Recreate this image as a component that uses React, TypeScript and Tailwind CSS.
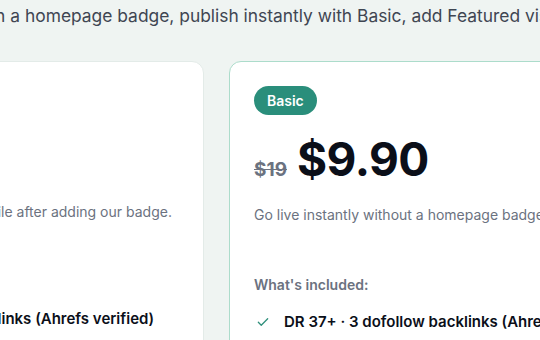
import React from "react";

function Check() {
  return (
    <svg width="14" height="14" viewBox="0 0 24 24" fill="none" stroke="#2f8f7b" strokeWidth="2.2" strokeLinecap="round" strokeLinejoin="round">
      <path d="M4 12.5l5 5L20 6.5" />
    </svg>
  );
}

export default function App() {
  return (
    <div
      className="w-[540px] h-[340px] overflow-hidden bg-[#eff4f2] text-[#111827]"
      style={{ fontFamily: "Inter, 'Noto Sans', sans-serif" }}
    >
      <div className="pt-[5px] whitespace-nowrap text-[17.4px] leading-[22px] text-[#3f4652] ml-[-129px]">
        Submit free with a homepage badge, publish instantly with Basic, add Featured visibility for more exposure.
      </div>
      <div className="mt-[34px] flex gap-[25px] ml-[-176px]">
        <div className="w-[380px] shrink-0 h-[300px] bg-white rounded-[12px] border border-[#e3ebe8] px-[24px] pt-[24px]">
          <div className="h-[29px] w-fit px-[13px] rounded-full bg-[#e5e7eb] text-[14px] font-semibold leading-[29px] text-[#374151]">Free</div>
          <div className="mt-[21px] flex items-baseline gap-3">
            <span className="text-[46px] leading-[46px] font-bold tracking-[-0.5px] text-[#0b0f19]">$0</span>
          </div>
          <div className="mt-[20px] text-[14px] leading-[20px] text-[#6b7280] whitespace-nowrap">
            Get featured via a profile after adding our badge.
          </div>
          <div className="mt-[50px] text-[14px] leading-[20px] font-semibold text-[#6b7280]">What's included:</div>
          <div className="mt-[17px] flex items-center gap-[19px] whitespace-nowrap">
            <span className="ml-[2px] flex"><Check /></span>
            <span className="text-[15px] leading-[20px] font-semibold text-[#0b0f19]">DR 37+ · 2 backlinks (Ahrefs verified)</span>
          </div>
        </div>
        <div className="w-[380px] shrink-0 h-[300px] bg-white rounded-[12px] border border-[#acdccb] px-[24px] pt-[24px]">
          <div className="h-[29px] w-fit px-[13px] rounded-full bg-[#2a8e7b] text-[14px] font-semibold leading-[29px] text-white">Basic</div>
          <div className="mt-[21px] flex items-baseline gap-[10px]">
            <span className="text-[19px] font-bold text-[#6b7280] line-through">$19</span>
            <span className="text-[46px] leading-[46px] font-bold tracking-[-0.5px] text-[#0b0f19]">$9.90</span>
          </div>
          <div className="mt-[20px] text-[14px] leading-[20px] text-[#6b7280] whitespace-nowrap">
            Go live instantly without a homepage badge.
          </div>
          <div className="mt-[50px] text-[14px] leading-[20px] font-semibold text-[#6b7280]">What's included:</div>
          <div className="mt-[17px] flex items-center gap-[14px] whitespace-nowrap">
            <span className="ml-[2px] flex"><Check /></span>
            <span className="text-[15px] leading-[20px] font-semibold text-[#0b0f19]">DR 37+ · 3 dofollow backlinks (Ahrefs verified)</span>
          </div>
        </div>
      </div>
    </div>
  );
}
